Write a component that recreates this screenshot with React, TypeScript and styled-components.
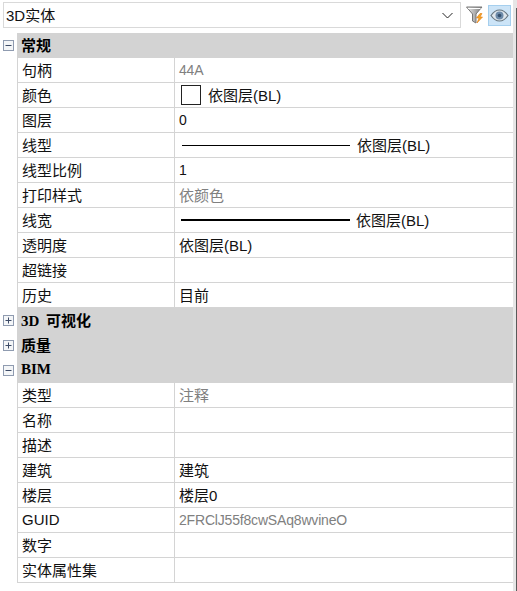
import { createGlobalStyle } from 'styled-components';
import styled from 'styled-components';

const GlobalStyle = createGlobalStyle`
  html, body {
    margin: 0;
    padding: 0;
    background: #ffffff;
  }
`;

const Panel = styled.div`
  position: relative;
  width: 517px;
  height: 591px;
  overflow: hidden;
  background: #ffffff;
  color: #111111;
  font-family: "Liberation Sans", "Noto Sans CJK SC", sans-serif;
  font-size: 15px;
`;

const EdgeBar = styled.div`
  position: absolute;
  top: 0;
  right: 0;
  bottom: 0;
  width: 4px;
  box-sizing: border-box;
  background: #e6e6e6;
`;

const EdgeLine = styled.div`
  position: absolute;
  top: 8px;
  right: 0;
  bottom: 0;
  width: 1px;
  background: #5a5a5a;
`;

const Toolbar = styled.div`
  display: flex;
  align-items: center;
  height: 33px;
  padding: 2px 6px 5px 3px;
  box-sizing: border-box;
`;

const Combo = styled.div`
  width: 460px;
  height: 26px;
  box-sizing: border-box;
  border: 1px solid #d9d9d9;
  display: flex;
  align-items: center;
  justify-content: space-between;
  padding: 0 7px 2px 2px;
  margin-right: 3px;
`;

const ChevronSvg = styled.svg`
  margin-top: 2px;
`;

const FilterButton = styled.div`
  width: 21px;
  height: 21px;
  display: flex;
  align-items: center;
  justify-content: center;
  margin-right: 3px;
`;

const EyeButton = styled.div`
  width: 23px;
  height: 21px;
  box-sizing: border-box;
  display: flex;
  align-items: center;
  justify-content: center;
  background: #cce4f7;
  border: 1px solid #a5cfee;
`;

const Sheet = styled.div`
  width: 513px;
`;

const Group = styled.div`
  display: flex;
  height: 25px;
`;

const Gutter = styled.div`
  width: 17px;
  flex: none;
  display: flex;
  align-items: center;
  padding-left: 3px;
  box-sizing: border-box;
`;

const GroupTitle = styled.div`
  flex: 1;
  background: #d3d3d3;
  padding: 0 0 2px 4px;
  display: flex;
  align-items: center;
  font-family: "Liberation Serif", "Noto Sans CJK SC", serif;
  font-weight: 700;
  font-size: 15px;
  word-spacing: 3px;
  color: #000000;
`;

const Row = styled.div`
  display: flex;
  height: 25px;
  margin-left: 17px;
  box-sizing: border-box;
  border-bottom: 1px solid #d4d4d4;
  border-left: 1px solid #d4d4d4;
`;

const Label = styled.div`
  width: 157px;
  flex: none;
  box-sizing: border-box;
  padding: 0 0 2px 4px;
  border-right: 1px solid #d4d4d4;
  display: flex;
  align-items: center;
`;

const Value = styled.div<{ $muted?: boolean }>`
  flex: 1;
  display: flex;
  align-items: center;
  padding-left: 4px;
  color: ${(p) => (p.$muted ? '#808080' : '#111111')};
`;

const ValueText = styled.span`
  padding-bottom: 2px;
`;

const Narrow = styled.span`
  font-size: 14px;
  letter-spacing: -0.18px;
`;

const Swatch = styled.div`
  width: 20px;
  height: 20px;
  box-sizing: border-box;
  border: 1px solid #222222;
  background: #ffffff;
  margin: 0 7px 0 2px;
`;

const LineSample = styled.div<{ $weight: number }>`
  width: ${(p) => (p.$weight > 1 ? 169 : 168)}px;
  height: ${(p) => p.$weight}px;
  background: #000000;
  margin: 0 ${(p) => (p.$weight > 1 ? 6 : 7)}px 0 ${(p) => (p.$weight > 1 ? 2 : 3)}px;
`;

const ExpandBox = ({ open }: { open: boolean }) => (
  <svg width="11" height="11" viewBox="0 0 11 11">
    <rect x="0.5" y="0.5" width="10" height="10" fill="#f4f6f8" stroke="#8f9bb0" />
    <path d="M2.5 5.5h6" stroke="#3c4a66" />
    {!open && <path d="M5.5 2.5v6" stroke="#3c4a66" />}
  </svg>
);

const Chevron = () => (
  <ChevronSvg width="11" height="7" viewBox="0 0 11 7">
    <path d="M0.5 1l5 5 5-5" fill="none" stroke="#222222" />
  </ChevronSvg>
);

const FilterIcon = () => (
  <svg width="18" height="18" viewBox="0 0 18 18">
    <defs>
      <linearGradient id="funnel" x1="0" y1="0" x2="1" y2="0">
        <stop offset="0" stopColor="#ececec" />
        <stop offset="0.6" stopColor="#a8a8a8" />
        <stop offset="1" stopColor="#7c7c7c" />
      </linearGradient>
    </defs>
    <path d="M0.500 1h15.500l-6 7v9l-3.500-2V8z" fill="url(#funnel)" stroke="#767676" />
    <path d="M2 2.500h12.500" stroke="#ffffff" />
    <path d="M14 7.500l-3.500 4.500h2.500l-2 5 5.500-6h-2.500l2-3.500z" fill="#f5a623" stroke="#e27a12" strokeWidth="0.6" />
  </svg>
);

const EyeIcon = () => (
  <svg width="19" height="13" viewBox="0 0 19 13">
    <path d="M1 6.500C4 2 7 1 9.500 1s5.500 1 8.500 5.500C15 11 12 12 9.500 12S4 11 1 6.500z" fill="#dfe6ec" stroke="#66757f" strokeWidth="1.200" />
    <circle cx="9.500" cy="6.500" r="4" fill="#6d8aa8" />
    <circle cx="9.500" cy="6.500" r="1.800" fill="#34506f" />
  </svg>
);

type Item = {
  label: string;
  value?: string;
  muted?: boolean;
  narrow?: boolean;
  swatch?: boolean;
  line?: number;
};

type Section = { title: string; open: boolean; items: Item[] };

const sections: Section[] = [
  {
    title: '常规',
    open: true,
    items: [
      { label: '句柄', value: '44A', muted: true, narrow: true },
      { label: '颜色', value: '依图层(BL)', swatch: true },
      { label: '图层', value: '0', narrow: true },
      { label: '线型', value: '依图层(BL)', line: 1 },
      { label: '线型比例', value: '1', narrow: true },
      { label: '打印样式', value: '依颜色', muted: true },
      { label: '线宽', value: '依图层(BL)', line: 2 },
      { label: '透明度', value: '依图层(BL)' },
      { label: '超链接' },
      { label: '历史', value: '目前' },
    ],
  },
  { title: '3D 可视化', open: false, items: [] },
  { title: '质量', open: false, items: [] },
  {
    title: 'BIM',
    open: true,
    items: [
      { label: '类型', value: '注释', muted: true },
      { label: '名称' },
      { label: '描述' },
      { label: '建筑', value: '建筑' },
      { label: '楼层', value: '楼层0' },
      { label: 'GUID', value: '2FRClJ55f8cwSAq8wvineO', muted: true, narrow: true },
      { label: '数字' },
      { label: '实体属性集' },
    ],
  },
];

const App = () => (
  <Panel>
    <GlobalStyle />
    <Toolbar>
      <Combo>
        3D实体
        <Chevron />
      </Combo>
      <FilterButton>
        <FilterIcon />
      </FilterButton>
      <EyeButton>
        <EyeIcon />
      </EyeButton>
    </Toolbar>
    <Sheet>
      {sections.map((section) => (
        <div key={section.title}>
          <Group>
            <Gutter>
              <ExpandBox open={section.open} />
            </Gutter>
            <GroupTitle>{section.title}</GroupTitle>
          </Group>
          {section.items.map((item) => (
            <Row key={item.label}>
              <Label>{item.label}</Label>
              <Value $muted={item.muted}>
                {item.swatch && <Swatch />}
                {item.line && <LineSample $weight={item.line} />}
                {item.narrow ? <Narrow>{item.value}</Narrow> : <ValueText>{item.value}</ValueText>}
              </Value>
            </Row>
          ))}
        </div>
      ))}
    </Sheet>
    <EdgeBar />
    <EdgeLine />
  </Panel>
);

export default App;
